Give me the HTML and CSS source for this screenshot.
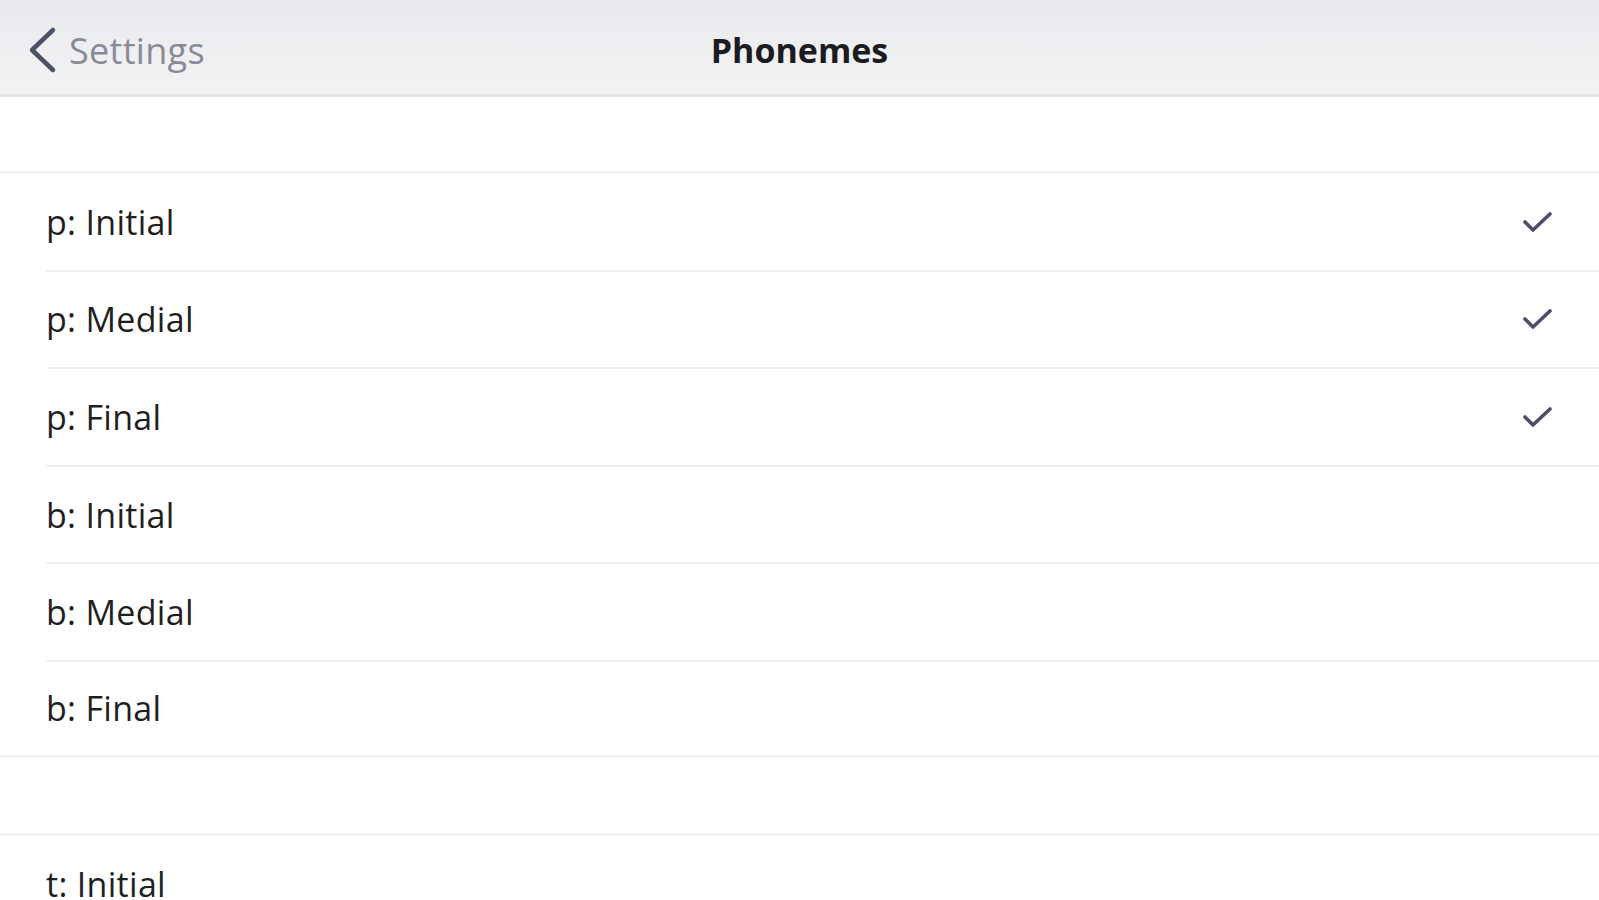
FILE: index.html
```html
<!DOCTYPE html>
<html>
<head>
<meta charset="utf-8">
<link rel="stylesheet" href="styles.css">
</head>
<body>
<div class="app">
  <header class="navbar">
    <div class="back">
      <svg class="chev" width="30" height="48" viewBox="0 0 30 48"><path d="M26 4 L5 24 L26 44" fill="none" stroke="#4d5166" stroke-width="4.5" stroke-linecap="round" stroke-linejoin="round"/></svg>
      <span class="back-label">Settings</span>
    </div>
    <div class="title">Phonemes</div>
    <div class="spacer-right"></div>
  </header>
  <div class="gap-top"></div>
  <section class="group">
    <div class="row"><span class="label">p: Initial</span><svg class="check" width="30" height="22" viewBox="0 0 30 22"><path d="M3 11 L11 19 L28 3" fill="none" stroke="#4b4f66" stroke-width="3.6" stroke-linecap="round" stroke-linejoin="round"/></svg></div>
    <div class="row"><span class="label">p: Medial</span><svg class="check" width="30" height="22" viewBox="0 0 30 22"><path d="M3 11 L11 19 L28 3" fill="none" stroke="#4b4f66" stroke-width="3.6" stroke-linecap="round" stroke-linejoin="round"/></svg></div>
    <div class="row"><span class="label">p: Final</span><svg class="check" width="30" height="22" viewBox="0 0 30 22"><path d="M3 11 L11 19 L28 3" fill="none" stroke="#4b4f66" stroke-width="3.6" stroke-linecap="round" stroke-linejoin="round"/></svg></div>
    <div class="row"><span class="label">b: Initial</span></div>
    <div class="row"><span class="label">b: Medial</span></div>
    <div class="row last"><span class="label">b: Final</span></div>
  </section>
  <div class="gap-mid"></div>
  <section class="group">
    <div class="row"><span class="label">t: Initial</span></div>
  </section>
</div>
</body>
</html>
```
FILE: styles.css
```css
html, body {
  margin: 0;
  padding: 0;
  background: #ffffff;
  overflow: hidden;
}
.app {
  width: 1599px;
  height: 900px;
  font-family: "Open Sans", "Liberation Sans", sans-serif;
  color: #1f1f22;
  overflow: hidden;
}
.navbar {
  height: 88px;
  padding-top: 6px;
  border-bottom: 3px solid #e4e4e7;
  background: linear-gradient(#e9eaed, #f3f3f5);
  display: flex;
  align-items: center;
  justify-content: space-between;
  box-sizing: content-box;
}
.back {
  width: 400px;
  display: flex;
  align-items: center;
  padding-left: 27px;
  gap: 12px;
}
.chev { display: block; }
.back-label {
  font-size: 36px;
  color: #888b97;
  letter-spacing: 0.3px;
}
.title {
  font-size: 34px;
  font-weight: 700;
  color: #1c1c20;
}
.spacer-right { width: 427px; }
.gap-top { height: 74px; }
.group {
  border-top: 3px solid #f3f3f5;
}
.row {
  height: 95.6px;
  margin-left: 46px;
  padding-right: 47px;
  border-bottom: 2px solid #efeff1;
  display: flex;
  align-items: center;
  justify-content: space-between;
}
.row.last {
  height: 93px;
  margin-left: 0;
  padding-left: 46px;
  border-bottom: 3px solid #f3f3f5;
}
.label {
  font-size: 34px;
  line-height: 30px;
  letter-spacing: 0.3px;
}
.check { display: block; }
.gap-mid { height: 75px; }
```
